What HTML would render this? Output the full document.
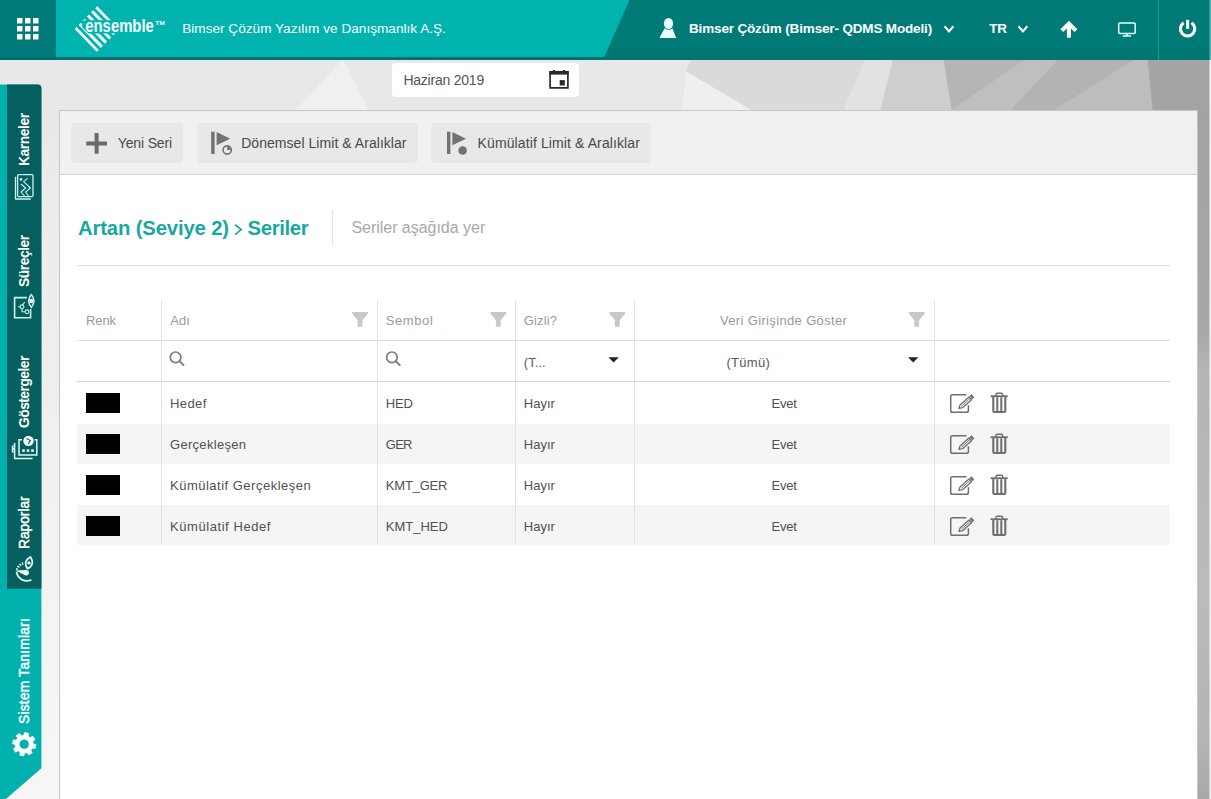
<!DOCTYPE html>
<html lang="tr">
<head>
<meta charset="utf-8">
<title>Ensemble</title>
<style>
*{box-sizing:border-box;margin:0;padding:0}
html,body{width:1211px;height:799px;overflow:hidden;background:#e8e8e8;font-family:"Liberation Sans",sans-serif;}
.abs{position:absolute}
#bg{position:absolute;left:0;top:0;width:1211px;height:799px}
/* header */
#hdr{position:absolute;left:0;top:0;width:1211px;height:60px}
.htxt{position:absolute;color:#fff;font-size:14px;white-space:nowrap;line-height:16px}
/* sidebar */
.vtxt{position:absolute;color:#fff;font-size:13.8px;font-weight:bold;white-space:nowrap;transform-origin:0 0;transform:rotate(-90deg);line-height:14px}
/* panel */
#panel{position:absolute;left:59px;top:110px;width:1139px;height:700px;background:#fff;border:1px solid #c6c6c6}
#tbar{position:absolute;left:0;top:0;width:1137px;height:64px;background:#f1f1f1;border-bottom:1px solid #d2d2d2}
.btn{position:absolute;top:12px;height:40px;background:#e8e8e8;border-radius:4px}
.btn span{position:absolute;top:11.7px;font-size:14px;color:#4a4a4a;white-space:nowrap;line-height:16px}
/* table */
.th{position:absolute;top:313px;font-size:13px;color:#9a9a9a;line-height:15px;white-space:nowrap}
.td{position:absolute;font-size:13px;color:#505050;line-height:15px;white-space:nowrap}
.vl{position:absolute;top:300px;width:1px;height:245px;background:#e2e2e2}
.hl{position:absolute;left:77px;width:1093px;height:1px;background:#dedede}
.row{position:absolute;left:77px;width:1093px;height:41px;background:#f5f5f5}
.sw{position:absolute;left:86px;width:34px;height:20px;background:#000}
</style>
</head>
<body>
<svg id="bg" viewBox="0 0 1211 799">
  <defs>
    <linearGradient id="gr" x1="0" x2="0" y1="110" y2="799" gradientUnits="userSpaceOnUse">
      <stop offset="0" stop-color="#a3a3a3"/><stop offset="0.32" stop-color="#a8a8a8"/><stop offset="0.38" stop-color="#b5b5b5"/><stop offset="0.7" stop-color="#bbbbbb"/><stop offset="0.92" stop-color="#b4b4b4"/><stop offset="1" stop-color="#a8a8a8"/>
    </linearGradient>
    <linearGradient id="gl" x1="0" x2="0" y1="60" y2="799" gradientUnits="userSpaceOnUse">
      <stop offset="0" stop-color="#e8e8e8"/><stop offset="0.07" stop-color="#e8e8e8"/><stop offset="0.14" stop-color="#ebebeb"/><stop offset="0.45" stop-color="#efefef"/><stop offset="0.7" stop-color="#f3f3f3"/><stop offset="1" stop-color="#f6f6f6"/>
    </linearGradient>
  </defs>
  <rect x="0" y="0" width="1211" height="799" fill="#e8e8e8"/>
  <rect x="0" y="85" width="60" height="714" fill="url(#gl)"/>
  <polygon points="343,60 296,110 368,110" fill="#f0f0f0" stroke="#f0f0f0" stroke-width="0.8"/>
  <polygon points="686,71 752,110 683,110" fill="#efefef" stroke="#efefef" stroke-width="0.8"/>
  <polygon points="691,60 865,60 844,110 752,110 686,71" fill="#dadada" stroke="#dadada" stroke-width="0.8"/>
  <polygon points="865,60 893,60 881,110 844,110" fill="#e2e2e2" stroke="#e2e2e2" stroke-width="0.8"/>
  <polygon points="893,60 944,60 952,110 881,110" fill="#cecece" stroke="#cecece" stroke-width="0.8"/>
  <polygon points="944,60 1025,60 952,110" fill="#b5b5b5" stroke="#b5b5b5" stroke-width="0.8"/>
  <polygon points="1025,60 1058,60 1011,110 952,110" fill="#bfbfbf" stroke="#bfbfbf" stroke-width="0.8"/>
  <polygon points="1058,60 1134,60 1055,110 1011,110" fill="#b3b3b3" stroke="#b3b3b3" stroke-width="0.8"/>
  <polygon points="1134,60 1148,60 1153,110 1055,110" fill="#bdbdbd" stroke="#bdbdbd" stroke-width="0.8"/>
  <polygon points="1148,60 1211,60 1211,110 1153,110" fill="#a4a4a4" stroke="#a4a4a4" stroke-width="0.8"/>
  <rect x="1197" y="110" width="14" height="689" fill="url(#gr)"/>
  <rect x="1209.5" y="60" width="1.5" height="739" fill="#f4f4f4"/>
</svg>

<div id="hdr">
<svg class="abs" style="left:0;top:0" width="1211" height="60" viewBox="0 0 1211 60">
  <rect x="0" y="0" width="1211" height="60" fill="#007a77"/>
  <rect x="0" y="49" width="1211" height="11" fill="#007673"/>
  <polygon points="0,0 629.5,0 603,60 0,60" fill="#00716e"/>
  <polygon points="0,0 629.5,0 604.3,57 0,57" fill="#00b3af"/>
  <rect x="0" y="0" width="56" height="57" fill="#007b79"/>
  <rect x="1158" y="0" width="1" height="60" fill="#249793"/>
  <rect x="1209.5" y="0" width="1.5" height="60" fill="#5fb5b3"/>
  <!-- grid icon -->
  <g fill="#fff">
    <rect x="17" y="18" width="5.5" height="5.5"/><rect x="25" y="18" width="5.5" height="5.5"/><rect x="33" y="18" width="5.5" height="5.5"/>
    <rect x="17" y="26" width="5.5" height="5.5"/><rect x="25" y="26" width="5.5" height="5.5"/><rect x="33" y="26" width="5.5" height="5.5"/>
    <rect x="17" y="34" width="5.5" height="5.5"/><rect x="25" y="34" width="5.5" height="5.5"/><rect x="33" y="34" width="5.5" height="5.5"/>
  </g>
  <!-- user icon -->
  <g fill="#eafffd">
    <ellipse cx="668.5" cy="23.5" rx="4.6" ry="5.6"/>
    <path d="M664.6 28.2 Q668.5 31.5 672.4 28.2 L676.2 37.9 L659.4 37.9 Z"/>
  </g>
  <!-- chevrons -->
  <g fill="none" stroke="#fff" stroke-width="2.1" stroke-linecap="butt" stroke-linejoin="miter">
    <path d="M944.6 26.3 L949 31.4 L953.4 26.3"/>
    <path d="M1018.5 26.3 L1022.9 31.4 L1027.3 26.3"/>
  </g>
  <!-- up arrow -->
  <path d="M1068.9 20.8 L1077.4 29.3 L1074.6 32.1 L1070.9 28.4 L1070.9 37.7 L1066.9 37.7 L1066.9 28.4 L1063.2 32.1 L1060.4 29.3 Z" fill="#fff"/>
  <!-- monitor -->
  <g fill="none" stroke="#e6fffd" stroke-width="1.5">
    <rect x="1118.7" y="22.9" width="16.5" height="10.6" rx="1.2"/>
    <path d="M1127 33.5 V35.6 M1122.7 35.9 H1131"/>
  </g>
  <!-- power -->
  <g fill="none" stroke="#fff" stroke-width="3" stroke-linecap="butt">
    <path d="M1183.7 22.7 A7.2 7.2 0 1 0 1191.5 22.7" stroke-width="3.1"/>
    <path d="M1187.6 19.8 V28.8"/>
  </g>
</svg>
<svg class="abs" style="left:0;top:0" width="200" height="57" viewBox="0 0 200 57">
  <defs><clipPath id="dia"><polygon points="95.2,4 72.4,27 97.8,53 120.5,30"/></clipPath></defs>
  <g clip-path="url(#dia)" stroke="#f2fffe" stroke-width="3" stroke-linecap="butt">
    <line x1="96.30" y1="7.10" x2="118.53" y2="30.04"/>
    <line x1="92.14" y1="11.30" x2="114.37" y2="34.24"/>
    <line x1="87.98" y1="15.50" x2="110.21" y2="38.44"/>
    <line x1="83.82" y1="19.70" x2="106.05" y2="42.64"/>
    <line x1="79.66" y1="23.90" x2="101.89" y2="46.84"/>
    <line x1="75.50" y1="28.10" x2="97.73" y2="51.04"/>
  </g>
  <polygon points="84.6,20.2 125,20.2 125,33.6 88.6,33.6 82.2,27.4 82.2,22.6" fill="#00b3af"/>
  <text x="85.3" y="31.8" font-family="Liberation Sans, sans-serif" font-weight="bold" font-size="17.5" fill="#f4fffe" textLength="68.5" lengthAdjust="spacingAndGlyphs">ensemble</text>
  <text x="155.6" y="24.6" font-family="Liberation Sans, sans-serif" font-weight="bold" font-size="5.5" fill="#f4fffe" textLength="9" lengthAdjust="spacingAndGlyphs">TM</text>
</svg>
<div class="htxt" id="h1" style="left:182.2px;top:20.9px;font-size:13.6px;letter-spacing:0.014px">Bimser Çözüm Yazılım ve Danışmanlık A.Ş.</div>
<div class="htxt" id="h2" style="left:689px;top:20.9px;font-weight:bold;font-size:13.5px;letter-spacing:-0.155px">Bimser Çözüm (Bimser- QDMS Modeli)</div>
<div class="htxt" id="h3" style="left:989.3px;top:20.9px;font-weight:bold;font-size:13.5px;letter-spacing:-0.400px">TR</div>
</div>
<div id="side">
<svg class="abs" style="left:0;top:60px" width="60" height="739" viewBox="0 60 60 739">
  <path d="M0 84.4 H37.5 Q41.4 84.4 41.4 88.4 V768.3 L5.3 799.5 H0 Z" fill="#00b1ae"/>
  <path d="M7 84.4 H37.5 Q41.4 84.4 41.4 88.4 V588.8 H7 Z" fill="#055f5e"/>
  <!-- karneler icon -->
  <g fill="none" stroke="#c9f4ef" stroke-width="1.3" stroke-linejoin="round">
    <rect x="17.6" y="174.6" width="15.4" height="22" rx="1"/>
    <path d="M15.5 176.8 V199 H30.8"/>
    <path d="M27.6 178.4 L23.6 181.6 L30.4 188 L25.6 192 L28.4 195.8" stroke-width="1.1"/>
    <path d="M21 184 L25.6 188 L21 192 L24.4 195.8" stroke-width="1.1"/>
    <circle cx="21" cy="179.4" r="0.7" fill="#c9f4ef"/>
  </g>
  <!-- surecler icon -->
  <g fill="none" stroke="#c9f4ef" stroke-width="1.3">
    <path d="M27 297.6 H14.6 V317.8 H30.6 V309" stroke-width="1.6"/>
    <path d="M31.3 294.6 Q36.6 301 31.3 307.4 Q26 301 31.3 294.6 Z" stroke-width="1.5" fill="#055f5e" stroke-linejoin="round"/>
    <circle cx="31.3" cy="301" r="2.2" fill="#eafffc" stroke="none"/>
    <circle cx="22" cy="306.8" r="1.9" stroke-width="1.1"/>
    <circle cx="27" cy="311.8" r="1.9" stroke-width="1.1"/>
    <path d="M18 306.8 H20 M22 308.8 V311.8 H25 M22.4 304.8 L25 302" stroke-width="1.1"/>
  </g>
  <!-- gostergeler icon -->
  <g fill="none" stroke="#dcfbf7" stroke-width="1.5">
    <path d="M22 439.8 H19 V455 H36.8 V439.8 H34.5"/>
    <path d="M14.6 443 V458.6 H32.6"/>
    <path d="M14.6 446 H12.4 V448.4 H14.6 M14.6 449.6 H12.4 V452 H14.6" stroke-width="1.2"/>
    <circle cx="28.5" cy="440.9" r="5.2" fill="#f2fffd" stroke="none"/>
    <path d="M26.4 438.6 L30.4 440.6 L28.4 443.6" stroke="#055f5e" stroke-width="1.1"/>
    <g fill="#dcfbf7" stroke="none"><rect x="22.2" y="449.3" width="2.6" height="2.6"/><rect x="26.7" y="449.3" width="2.6" height="2.6"/><rect x="31.2" y="449.3" width="2.6" height="2.6"/></g>
  </g>
  <!-- raporlar icon -->
  <g fill="none" stroke="#dffbf8" stroke-width="1.8" stroke-linecap="round">
    <path d="M16.6 572.4 A10.6 10.6 0 0 0 30.8 580.2"/>
    <path d="M16.8 569.6 A10.6 10.6 0 0 1 23.6 563.2" stroke-dasharray="1.4 1.2" stroke-width="2.4" stroke-linecap="butt"/>
    <path d="M15.6 570.6 L26.2 570.1 A2.7 2.7 0 1 1 25.6 575.4 Z" fill="#f4fffd" stroke="none"/>
    <path d="M29 556.8 Q35.6 562.9 29 569 Q22.4 562.9 29 556.8 Z" stroke-width="1.7" stroke-linejoin="round" transform="rotate(14 29 562.9)"/>
    <circle cx="29" cy="562.9" r="1.7" fill="#f4fffd" stroke="none"/>
  </g>
  <!-- gear -->
  <path d="M33.19 743.75 L35.99 744.63 L35.15 748.60 L32.23 748.26 L30.87 750.24 L32.23 752.84 L28.83 755.05 L27.00 752.75 L24.65 753.19 L23.77 755.99 L19.80 755.15 L20.14 752.23 L18.16 750.87 L15.56 752.23 L13.35 748.83 L15.65 747.00 L15.21 744.65 L12.41 743.77 L13.25 739.80 L16.17 740.14 L17.53 738.16 L16.17 735.56 L19.57 733.35 L21.40 735.65 L23.75 735.21 L24.63 732.41 L28.60 733.25 L28.26 736.17 L30.24 737.53 L32.84 736.17 L35.05 739.57 L32.75 741.40 Z M29.2 744.2 A5 5 0 1 0 19.2 744.2 A5 5 0 1 0 29.2 744.2 Z" fill="#fff" fill-rule="evenodd" stroke="#fff" stroke-width="0.6" stroke-linejoin="round"/>
</svg>
<div class="vtxt" id="v1" style="left:17.8px;top:166px;letter-spacing:-0.423px">Karneler</div>
<div class="vtxt" id="v2" style="left:17.8px;top:286.9px;letter-spacing:-0.442px">Süreçler</div>
<div class="vtxt" id="v3" style="left:17.8px;top:427.7px;letter-spacing:-0.514px">Göstergeler</div>
<div class="vtxt" id="v4" style="font-weight:normal;-webkit-text-stroke:0.45px #fff;left:17.8px;top:549.4px;letter-spacing:-0.040px">Raporlar</div>
<div class="vtxt" id="v5" style="font-weight:normal;-webkit-text-stroke:0.45px #fff;left:17.8px;top:724.4px;letter-spacing:0.219px">Sistem Tanımları</div>
</div>
<div class="abs" id="datebox" style="left:392px;top:63px;width:187px;height:34px;background:#fff;border-radius:4px"></div>
<div class="abs" id="datetxt" style="left:403.4px;top:72px;font-size:14px;color:#555;line-height:16px;white-space:nowrap;letter-spacing:-0.223px">Haziran 2019</div>
<svg class="abs" style="left:545px;top:66px" width="30" height="28" viewBox="545 66 30 28">
  <path d="M550.1 72 H567.9 V87.9 H550.1 Z" fill="none" stroke="#2b2b2b" stroke-width="1.7"/>
  <rect x="549.25" y="71" width="19.5" height="3.6" fill="#2b2b2b"/>
  <rect x="552.6" y="69.9" width="2.6" height="2" rx="0.8" fill="#2b2b2b"/>
  <rect x="562.6" y="69.9" width="2.6" height="2" rx="0.8" fill="#2b2b2b"/>
  <rect x="559.7" y="80.1" width="5.1" height="5.4" fill="#2b2b2b"/>
</svg>
<div id="panel"><div id="tbar">
<div class="btn" id="b1" style="left:11.2px;width:112px"><span id="b1t" style="left:46.6px;letter-spacing:-0.148px">Yeni Seri</span></div>
<div class="btn" id="b2" style="left:137px;width:220.8px"><span id="b2t" style="left:44.2px;letter-spacing:0.047px">Dönemsel Limit &amp; Aralıklar</span></div>
<div class="btn" id="b3" style="left:370.5px;width:220.5px"><span id="b3t" style="left:47.1px;letter-spacing:0.107px">Kümülatif Limit &amp; Aralıklar</span></div>
</div></div>
<svg class="abs" style="left:60px;top:111px" width="620" height="64" viewBox="60 111 620 64">
  <path d="M94.6 133 H98.6 V141.4 H107 V145.4 H98.6 V153.8 H94.6 V145.4 H86.2 V141.4 H94.6 Z" fill="#6a6a6a"/>
  <g fill="#727272">
    <rect x="211.2" y="131.7" width="3.4" height="22.3"/>
    <path d="M216.6 132.1 L230.2 138.7 L216.6 145.3 Z"/>
    <circle cx="227.2" cy="150" r="4.1" fill="none" stroke="#727272" stroke-width="1.6"/>
    <path d="M227.2 150 V146.6 A3.4 3.4 0 0 1 230.6 150 Z" fill="#727272"/>
    <rect x="447" y="131.7" width="3.4" height="22.3"/>
    <path d="M452.4 132.1 L466 138.7 L452.4 145.3 Z"/>
    <circle cx="462.6" cy="150.5" r="4.3"/>
  </g>
</svg>

<div class="abs" id="t1" style="left:78px;top:215.2px;font-size:20.3px;font-weight:bold;color:#17a8a2;line-height:26px;white-space:nowrap;letter-spacing:-0.145px">Artan (Seviye 2)</div>
<svg class="abs" style="left:230px;top:220px" width="16" height="20" viewBox="230 220 16 20"><path d="M235 224.6 L241.2 229.6 L235 234.6" fill="none" stroke="#17a8a2" stroke-width="1.7"/></svg>
<div class="abs" id="t2" style="left:247.6px;top:215.2px;font-size:20.3px;font-weight:bold;color:#17a8a2;line-height:26px;white-space:nowrap;letter-spacing:-0.365px">Seriler</div>
<div class="abs" style="left:332px;top:210px;width:1px;height:35px;background:#e4e4e4"></div>
<div class="abs" id="sub" style="left:351.4px;top:219.4px;font-size:16px;color:#a9a9a9;line-height:18px;white-space:nowrap;letter-spacing:-0.026px">Seriler aşağıda yer</div>
<div class="hl" style="top:264.5px;background:#dcdcdc"></div>
<div class="row" style="top:423.5px;height:40.5px"></div>
<div class="row" style="top:505px;height:40px"></div>
<div class="hl" style="top:340px"></div>
<div class="hl" style="top:381px;height:1px;background:#d3d3d3"></div>
<div class="vl" style="left:161px"></div>
<div class="vl" style="left:377px"></div>
<div class="vl" style="left:515px"></div>
<div class="vl" style="left:634px"></div>
<div class="vl" style="left:934px"></div>
<div class="th" id="th1" style="left:86px;letter-spacing:-0.090px">Renk</div>
<div class="th" id="th2" style="left:170.2px;letter-spacing:0.061px">Adı</div>
<div class="th" id="th3" style="left:385.8px;letter-spacing:0.587px">Sembol</div>
<div class="th" id="th4" style="left:523.8px;letter-spacing:0.147px">Gizli?</div>
<div class="th" id="th5" style="left:719.9px;letter-spacing:0.355px">Veri Girişinde Göster</div>
<div class="td" id="f4" style="left:523.8px;top:355px;color:#5a5a5a;letter-spacing:0.066px">(T...</div>
<div class="td" id="f5" style="left:726.5px;top:355px;color:#5a5a5a;letter-spacing:0.285px">(Tümü)</div>
<div class="sw" style="top:393.2px"></div>
<div class="td" id="n0" style="left:170px;top:396px;letter-spacing:0.399px">Hedef</div>
<div class="td" id="s0" style="left:385.8px;top:396px;letter-spacing:-0.218px">HED</div>
<div class="td" id="g0" style="left:523.8px;top:396px;letter-spacing:-0.013px">Hayır</div>
<div class="td" id="e0" style="left:771.4px;top:396px;letter-spacing:-0.179px">Evet</div>
<div class="sw" style="top:434.2px"></div>
<div class="td" id="n1" style="left:170px;top:437px;letter-spacing:0.301px">Gerçekleşen</div>
<div class="td" id="s1" style="left:385.8px;top:437px;letter-spacing:-0.757px">GER</div>
<div class="td" id="g1" style="left:523.8px;top:437px;letter-spacing:-0.013px">Hayır</div>
<div class="td" id="e1" style="left:771.4px;top:437px;letter-spacing:-0.179px">Evet</div>
<div class="sw" style="top:475.2px"></div>
<div class="td" id="n2" style="left:170px;top:478px;letter-spacing:0.496px">Kümülatif Gerçekleşen</div>
<div class="td" id="s2" style="left:385.8px;top:478px;letter-spacing:-0.192px">KMT_GER</div>
<div class="td" id="g2" style="left:523.8px;top:478px;letter-spacing:-0.013px">Hayır</div>
<div class="td" id="e2" style="left:771.4px;top:478px;letter-spacing:-0.179px">Evet</div>
<div class="sw" style="top:516.2px"></div>
<div class="td" id="n3" style="left:170px;top:519px;letter-spacing:0.567px">Kümülatif Hedef</div>
<div class="td" id="s3" style="left:385.8px;top:519px;letter-spacing:-0.004px">KMT_HED</div>
<div class="td" id="g3" style="left:523.8px;top:519px;letter-spacing:-0.013px">Hayır</div>
<div class="td" id="e3" style="left:771.4px;top:519px;letter-spacing:-0.179px">Evet</div>
<svg class="abs" style="left:0;top:290px" width="1211" height="270" viewBox="0 290 1211 270">
<path d="M352.2 311.9 H368.0 V313.6 L362.5 320.2 V326.8 H357.7 V320.2 L352.2 313.6 Z" fill="#c8c8c8"/>
<path d="M490.4 311.9 H506.2 V313.6 L500.7 320.2 V326.8 H495.9 V320.2 L490.4 313.6 Z" fill="#c8c8c8"/>
<path d="M609.4 311.9 H625.2 V313.6 L619.7 320.2 V326.8 H614.9 V320.2 L609.4 313.6 Z" fill="#c8c8c8"/>
<path d="M908.8 311.9 H924.6 V313.6 L919.1 320.2 V326.8 H914.3 V320.2 L908.8 313.6 Z" fill="#c8c8c8"/>
<g fill="none" stroke="#7c7c7c" stroke-width="1.7"><circle cx="175.6" cy="357.3" r="5.3"/><path d="M179.5 361.2 L183.5 365.2" stroke-linecap="round" stroke-width="1.9"/></g>
<g fill="none" stroke="#7c7c7c" stroke-width="1.7"><circle cx="391.9" cy="357.3" r="5.3"/><path d="M395.8 361.2 L399.8 365.2" stroke-linecap="round" stroke-width="1.9"/></g>
<path d="M608.4 357.2 H618.8 L613.6 362.4 Z" fill="#222"/>
<path d="M908 357.2 H918.4 L913.2 362.4 Z" fill="#222"/>
<g transform="translate(0 0)" fill="none" stroke="#6e6e6e" stroke-width="1.5">
<path d="M966.4 394.7 H952.5 Q950.7 394.7 950.7 396.5 V410.5 Q950.7 412.3 952.5 412.3 H966.6 Q968.4 412.3 968.4 410.5 V405.2"/>
<path d="M958.9 408.4 L960.0 404.9 L969.0 396.9 L971.5 399.7 L962.6 407.7 Z" stroke-width="1.3" fill="#fff" stroke-linejoin="round"/><path d="M961.3 406.3 L970.2 398.3" stroke-width="0.9"/><path d="M969.8 396.1 L971.5 394.6 L974.0 397.4 L972.3 399.0 Z" fill="#6e6e6e" stroke-width="0.6"/>
<path d="M990.5 396.2 H1007.7" stroke-width="1.8"/>
<path d="M995.9 396 V394.7 Q995.9 393.3 997.3 393.3 H1001.3 Q1002.7 393.3 1002.7 394.7 V396" stroke-width="1.4"/>
<path d="M993.3 397 V410.9 Q993.3 412 994.4 412 H1004.2 Q1005.3 412 1005.3 410.9 V397" stroke-width="2.1"/>
<path d="M997.3 397.2 V411.4 M1001.3 397.2 V411.4" stroke-width="2"/>
</g>
<g transform="translate(0 41)" fill="none" stroke="#6e6e6e" stroke-width="1.5">
<path d="M966.4 394.7 H952.5 Q950.7 394.7 950.7 396.5 V410.5 Q950.7 412.3 952.5 412.3 H966.6 Q968.4 412.3 968.4 410.5 V405.2"/>
<path d="M958.9 408.4 L960.0 404.9 L969.0 396.9 L971.5 399.7 L962.6 407.7 Z" stroke-width="1.3" fill="#f5f5f5" stroke-linejoin="round"/><path d="M961.3 406.3 L970.2 398.3" stroke-width="0.9"/><path d="M969.8 396.1 L971.5 394.6 L974.0 397.4 L972.3 399.0 Z" fill="#6e6e6e" stroke-width="0.6"/>
<path d="M990.5 396.2 H1007.7" stroke-width="1.8"/>
<path d="M995.9 396 V394.7 Q995.9 393.3 997.3 393.3 H1001.3 Q1002.7 393.3 1002.7 394.7 V396" stroke-width="1.4"/>
<path d="M993.3 397 V410.9 Q993.3 412 994.4 412 H1004.2 Q1005.3 412 1005.3 410.9 V397" stroke-width="2.1"/>
<path d="M997.3 397.2 V411.4 M1001.3 397.2 V411.4" stroke-width="2"/>
</g>
<g transform="translate(0 82)" fill="none" stroke="#6e6e6e" stroke-width="1.5">
<path d="M966.4 394.7 H952.5 Q950.7 394.7 950.7 396.5 V410.5 Q950.7 412.3 952.5 412.3 H966.6 Q968.4 412.3 968.4 410.5 V405.2"/>
<path d="M958.9 408.4 L960.0 404.9 L969.0 396.9 L971.5 399.7 L962.6 407.7 Z" stroke-width="1.3" fill="#fff" stroke-linejoin="round"/><path d="M961.3 406.3 L970.2 398.3" stroke-width="0.9"/><path d="M969.8 396.1 L971.5 394.6 L974.0 397.4 L972.3 399.0 Z" fill="#6e6e6e" stroke-width="0.6"/>
<path d="M990.5 396.2 H1007.7" stroke-width="1.8"/>
<path d="M995.9 396 V394.7 Q995.9 393.3 997.3 393.3 H1001.3 Q1002.7 393.3 1002.7 394.7 V396" stroke-width="1.4"/>
<path d="M993.3 397 V410.9 Q993.3 412 994.4 412 H1004.2 Q1005.3 412 1005.3 410.9 V397" stroke-width="2.1"/>
<path d="M997.3 397.2 V411.4 M1001.3 397.2 V411.4" stroke-width="2"/>
</g>
<g transform="translate(0 123)" fill="none" stroke="#6e6e6e" stroke-width="1.5">
<path d="M966.4 394.7 H952.5 Q950.7 394.7 950.7 396.5 V410.5 Q950.7 412.3 952.5 412.3 H966.6 Q968.4 412.3 968.4 410.5 V405.2"/>
<path d="M958.9 408.4 L960.0 404.9 L969.0 396.9 L971.5 399.7 L962.6 407.7 Z" stroke-width="1.3" fill="#f5f5f5" stroke-linejoin="round"/><path d="M961.3 406.3 L970.2 398.3" stroke-width="0.9"/><path d="M969.8 396.1 L971.5 394.6 L974.0 397.4 L972.3 399.0 Z" fill="#6e6e6e" stroke-width="0.6"/>
<path d="M990.5 396.2 H1007.7" stroke-width="1.8"/>
<path d="M995.9 396 V394.7 Q995.9 393.3 997.3 393.3 H1001.3 Q1002.7 393.3 1002.7 394.7 V396" stroke-width="1.4"/>
<path d="M993.3 397 V410.9 Q993.3 412 994.4 412 H1004.2 Q1005.3 412 1005.3 410.9 V397" stroke-width="2.1"/>
<path d="M997.3 397.2 V411.4 M1001.3 397.2 V411.4" stroke-width="2"/>
</g>
</svg>
</body>
</html>
